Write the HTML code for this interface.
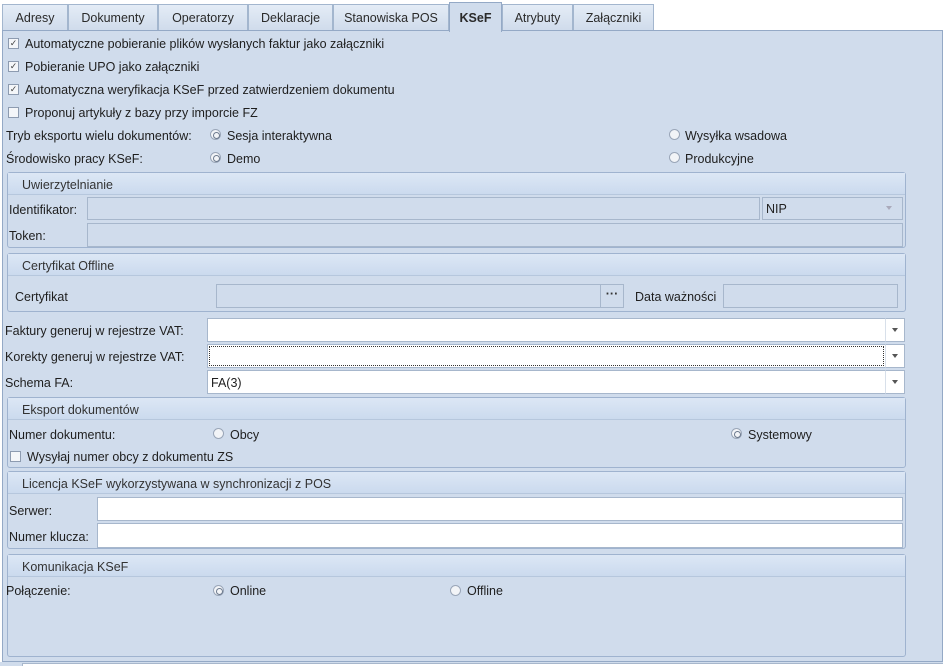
<!DOCTYPE html>
<html><head><meta charset="utf-8"><style>
*{box-sizing:border-box;margin:0;padding:0}
body{width:943px;height:666px;background:#fff;font-family:"Liberation Sans",sans-serif;font-size:12.5px;color:#1e1e1e;position:relative;overflow:hidden}
.a{position:absolute;white-space:nowrap}
.t{margin-top:1px}
.tab{position:absolute;top:4px;height:27px;border:1px solid #a3b6ce;border-bottom:none;background:linear-gradient(#e4ecf6,#cfdbeb);text-align:center;line-height:26px;font-size:12.5px;color:#2a2a2a}
.panel{position:absolute;left:2px;top:30px;width:941px;height:632px;background:#d0dcec;border:1px solid #94a9c6}
.grp{position:absolute;border:1px solid #9fb3cf;border-radius:3px;background:#d0dcec}
.gh{position:absolute;left:0;right:0;top:0;height:22px;background:linear-gradient(#dce7f5,#cbdaee);border-bottom:1px solid #b6c7dd;padding-left:14px;line-height:24px;color:#333}
.in{position:absolute;background:#fff;border:1px solid #a7b7cc}
.dis{position:absolute;background:#d0dcec;border:1px solid #a7b7cc}
.cb{position:absolute;width:11px;height:11px;border:1px solid #8d9bb0;background:#f4f6f9;font-size:9px;line-height:9px;text-align:center;color:#444}
.rb{position:absolute;width:11px;height:11px;border:1px solid #9aa6b8;border-radius:50%;background:#f2f4f7}
.rb.on::after{content:"";position:absolute;left:2px;top:2px;width:5px;height:5px;border-radius:50%;border:1px solid #6c7a8e}
.arr{position:absolute;width:20px;background:#fff;border:1px solid #a7b7cc;border-left:1px solid #d8e0ea}
.arr::after{content:"";position:absolute;left:6px;top:9px;border:3.5px solid transparent;border-top:4px solid #555}
</style></head><body>
<div class="tab" style="left:2px;width:66px">Adresy</div>
<div class="tab" style="left:68px;width:90px">Dokumenty</div>
<div class="tab" style="left:158px;width:90px">Operatorzy</div>
<div class="tab" style="left:248px;width:85px">Deklaracje</div>
<div class="tab" style="left:333px;width:116px">Stanowiska POS</div>
<div class="tab" style="left:502px;width:71px">Atrybuty</div>
<div class="tab" style="left:573px;width:81px">Załączniki</div>
<div class="panel"></div>
<div class="tab" style="left:449px;width:53px;top:2px;height:30px;background:#d0dcec;font-weight:bold;border-color:#94a9c6;z-index:2;line-height:30px">KSeF</div>

<div class="cb" style="left:8px;top:38px">✓</div><div class="a" style="left:25px;top:37px">Automatyczne pobieranie plików wysłanych faktur jako załączniki</div>
<div class="cb" style="left:8px;top:61px">✓</div><div class="a" style="left:25px;top:60px">Pobieranie UPO jako załączniki</div>
<div class="cb" style="left:8px;top:84px">✓</div><div class="a" style="left:25px;top:83px">Automatyczna weryfikacja KSeF przed zatwierdzeniem dokumentu</div>
<div class="cb" style="left:8px;top:107px"></div><div class="a" style="left:25px;top:106px">Proponuj artykuły z bazy przy imporcie FZ</div>

<div class="a" style="left:6px;top:129px">Tryb eksportu wielu dokumentów:</div>
<div class="rb on" style="left:210px;top:129px"></div><div class="a" style="left:227px;top:129px">Sesja interaktywna</div>
<div class="rb" style="left:669px;top:129px"></div><div class="a" style="left:685px;top:129px">Wysyłka wsadowa</div>
<div class="a" style="left:6px;top:152px">Środowisko pracy KSeF:</div>
<div class="rb on" style="left:210px;top:152px"></div><div class="a" style="left:227px;top:152px">Demo</div>
<div class="rb" style="left:669px;top:152px"></div><div class="a" style="left:685px;top:152px">Produkcyjne</div>

<div class="grp" style="left:7px;top:172px;width:899px;height:76px"><div class="gh">Uwierzytelnianie</div></div>
<div class="a" style="left:9px;top:203px">Identifikator:</div>
<div class="dis" style="left:87px;top:197px;width:673px;height:23px"></div>
<div class="dis" style="left:762px;top:197px;width:141px;height:23px;padding:4px 3px;color:#222">NIP</div>
<div class="a" style="left:886px;top:206px;border:3px solid transparent;border-top:4px solid #aab"></div>
<div class="a" style="left:9px;top:229px">Token:</div>
<div class="dis" style="left:87px;top:223px;width:816px;height:24px"></div>

<div class="grp" style="left:7px;top:253px;width:899px;height:59px"><div class="gh">Certyfikat Offline</div></div>
<div class="a" style="left:15px;top:290px">Certyfikat</div>
<div class="dis" style="left:216px;top:284px;width:385px;height:24px"></div>
<div class="dis" style="left:600px;top:284px;width:24px;height:24px;text-align:center;line-height:18px;font-weight:bold;color:#333">···</div>
<div class="a" style="left:635px;top:290px">Data ważności</div>
<div class="dis" style="left:723px;top:284px;width:175px;height:24px"></div>

<div class="a" style="left:5px;top:324px">Faktury generuj w rejestrze VAT:</div>
<div class="in" style="left:207px;top:318px;width:679px;height:24px"></div><div class="arr" style="left:885px;top:318px;height:24px"></div>
<div class="a" style="left:5px;top:350px">Korekty generuj w rejestrze VAT:</div>
<div class="in" style="left:207px;top:344px;width:679px;height:24px"><div style="position:absolute;inset:1px;border:1px dotted #333"></div></div><div class="arr" style="left:885px;top:344px;height:24px"></div>
<div class="a" style="left:5px;top:376px">Schema FA:</div>
<div class="in" style="left:207px;top:370px;width:679px;height:24px;padding:5px 3px">FA(3)</div><div class="arr" style="left:885px;top:370px;height:24px"></div>

<div class="grp" style="left:7px;top:397px;width:899px;height:71px"><div class="gh">Eksport dokumentów</div></div>
<div class="a" style="left:9px;top:428px">Numer dokumentu:</div>
<div class="rb" style="left:213px;top:428px"></div><div class="a" style="left:230px;top:428px">Obcy</div>
<div class="rb on" style="left:731px;top:428px"></div><div class="a" style="left:748px;top:428px">Systemowy</div>
<div class="cb" style="left:10px;top:451px"></div><div class="a" style="left:27px;top:450px">Wysyłaj numer obcy z dokumentu ZS</div>

<div class="grp" style="left:7px;top:471px;width:899px;height:78px"><div class="gh">Licencja KSeF wykorzystywana w synchronizacji z POS</div></div>
<div class="a" style="left:9px;top:504px">Serwer:</div>
<div class="in" style="left:97px;top:497px;width:806px;height:24px"></div>
<div class="a" style="left:9px;top:530px">Numer klucza:</div>
<div class="in" style="left:97px;top:523px;width:806px;height:25px"></div>

<div class="grp" style="left:7px;top:554px;width:899px;height:103px"><div class="gh">Komunikacja KSeF</div></div>
<div class="a" style="left:6px;top:584px">Połączenie:</div>
<div class="rb on" style="left:213px;top:585px"></div><div class="a" style="left:230px;top:584px">Online</div>
<div class="rb" style="left:450px;top:585px"></div><div class="a" style="left:467px;top:584px">Offline</div>
<div class="a" style="left:0;top:662px;width:943px;height:4px;background:#d0dcec"></div>
<div class="a" style="left:22px;top:663px;width:921px;height:3px;border-left:1px solid #a7b7cc;border-top:1px solid #a7b7cc;background:#fff"></div>
</body></html>
